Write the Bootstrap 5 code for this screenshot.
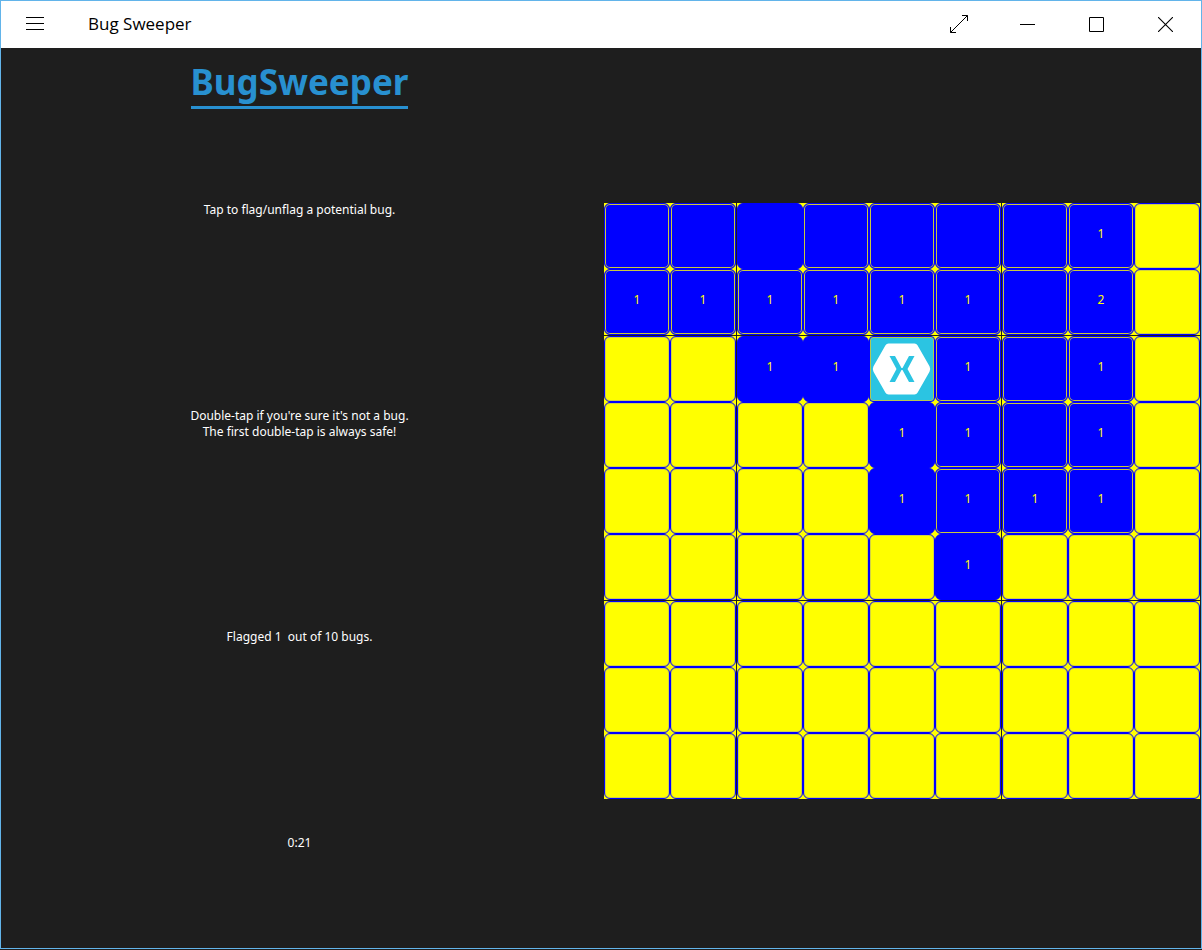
<!DOCTYPE html>
<html lang="en">
<head>
<meta charset="utf-8">
<meta name="viewport" content="width=device-width, initial-scale=1">
<title>Bug Sweeper</title>
<link href="https://cdn.jsdelivr.net/npm/bootstrap@5.3.0/dist/css/bootstrap.min.css" rel="stylesheet">
<style>
  body { font-family: "Noto Sans", "Open Sans", sans-serif; font-size: 12px; line-height: 16px; background: #1e1e1e; color: #fff; }
  .app-window { border: 1px solid #62b4ea; margin-bottom: 1px; min-height: calc(100vh - 1px); }
  .titlebar { background: #fff; color: #000; height: 47px; padding-right: 1px; }
  .titlebar .btn { --bs-btn-border-radius: 0; --bs-btn-padding-x: 0; --bs-btn-padding-y: 0; --bs-btn-border-width: 0; color: #000; width: 69px; height: 47px; line-height: 0; }
  .titlebar .menu-btn { width: 68px; }
  .app-name { font-family: "Open Sans", "Noto Sans", sans-serif; font-size: 17px; line-height: 24px; padding: 0 0 2px 19px; }
  .game { display: grid; grid-template-columns: 1fr 1fr; gap: 6px; }
  .info { padding-top: 12px; padding-bottom: 2px; }
  .game-title { font-size: 35px; line-height: 44px; padding-bottom: 2px; font-weight: 700; color: #2890d0; border-bottom: 3px solid #2890d0; }
  .notes { margin-top: -2px; }
  .board { padding: 6px 1px 0 0; }
  .board-row { display: flex; }
  .board-row:nth-child(4n+3) { margin-top: 1px; }
  .tile { flex: 1 1 0; aspect-ratio: 1; padding: 0; border: 0; background: #ff0; color: #ff0; display: flex; }
  .tile:nth-child(4n+3) { margin-left: 1px; }
  .face { flex: 1; display: flex; align-items: center; justify-content: center; padding-bottom: 5px; border: 1px solid #00f; border-radius: 6px; background: #ff0; box-shadow: inset 0 0 0 1px #d2d246; }
  .face.open { background: #00f; box-shadow: inset 0 0 0 1px #c8c83c; }
  .face.plain { box-shadow: none; }
  .face.flag { padding: 1px; background: #2bc4e2; box-shadow: inset 0 0 0 1px #b4c850; border-radius: 4px; }
  .face svg { width: 100%; height: 100%; display: block; }
</style>
</head>
<body>
<div class="app-window d-flex flex-column">
  <header class="titlebar d-flex align-items-center">
    <button class="btn menu-btn" type="button" aria-label="Menu"><svg width="18" height="15" viewBox="0 0 18 15" stroke="#000"><path d="M0 .5h18M0 6.5h18M0 12.5h18"/></svg></button>
    <span class="app-name me-auto">Bug Sweeper</span>
    <button class="btn" type="button" aria-label="Full screen"><svg width="19" height="19" viewBox="0 0 19 19" fill="none" stroke="#000"><path d="M1.500 17.500l17-17M13 .5h5.500V6M1.500 12v5.500H7"/></svg></button>
    <button class="btn" type="button" aria-label="Minimize"><svg width="15" height="15" viewBox="0 0 15 15" stroke="#000"><path d="M0 7.500h15"/></svg></button>
    <button class="btn" type="button" aria-label="Maximize"><svg width="15" height="15" viewBox="0 0 15 15" fill="none" stroke="#000"><path d="M.5.5h14v14H.5z"/></svg></button>
    <button class="btn" type="button" aria-label="Close"><svg width="15" height="15" viewBox="0 0 15 15" stroke="#000" stroke-width="1.100"><path d="M0 0l15 15M15 0L0 15"/></svg></button>
  </header>
  <main class="game flex-grow-1">
    <section class="info d-flex flex-column align-items-center text-center">
      <h1 class="game-title m-0">BugSweeper</h1>
      <div class="notes flex-grow-1 d-flex flex-column align-items-center justify-content-around">
        <p class="m-0">Tap to flag/unflag a potential bug.</p>
        <p class="m-0">Double-tap if you're sure it's not a bug.<br>The first double-tap is always safe!</p>
        <p class="m-0">Flagged 1&nbsp; out of 10 bugs.</p>
        <p class="m-0">0:21</p>
      </div>
    </section>
    <section class="board d-flex flex-column justify-content-center" aria-label="Board"><div id="rows"></div></section>
  </main>
</div>
<script>
  // One letter or digit per tile: "." hidden, "_" open and empty, "F" flagged.
  const field = ["_______1.", "111111_2.", "..11F1_1.", "....11_1.", "....1111.", ".....1...", ".........", ".........", "........."];
  // Open tiles drawn without the inner line, as "row,column".
  const plain = ["0,2", "2,2", "2,3", "3,4", "4,4", "5,5"];
  const flag = '<svg viewBox="0 0 62 62"><path fill="#fff" d="M17.500 5.500h26q2 0 3 1.700l12 21q1.500 2.800 0 5.600l-12 21q-1 1.700-3 1.700h-26q-2 0-3-1.700l-12-21q-1.500-2.800 0-5.600l12-21q1-1.700 3-1.700z"/><path fill="#2bc4e2" d="M18.500 18H24l6.500 12h1L38 18h5.500l-7 13 7 13H38l-6.500-12h-1L24 44h-5.500l7-13z"/></svg>';
  document.getElementById("rows").innerHTML = field.map((line, r) =>
    '<div class="board-row">' + [...line].map((c, k) => {
      const kind = c === "." ? "" : c === "F" ? " flag" : plain.includes(r + "," + k) ? " open plain" : " open";
      const text = c === "F" ? flag : /\d/.test(c) ? c : "";
      return `<button class="tile" type="button" aria-label="Row ${r + 1}, column ${k + 1}"><span class="face${kind}">${text}</span></button>`;
    }).join("") + "</div>").join("");
</script>
<script src="https://cdn.jsdelivr.net/npm/bootstrap@5.3.0/dist/js/bootstrap.bundle.min.js"></script>
</body>
</html>
